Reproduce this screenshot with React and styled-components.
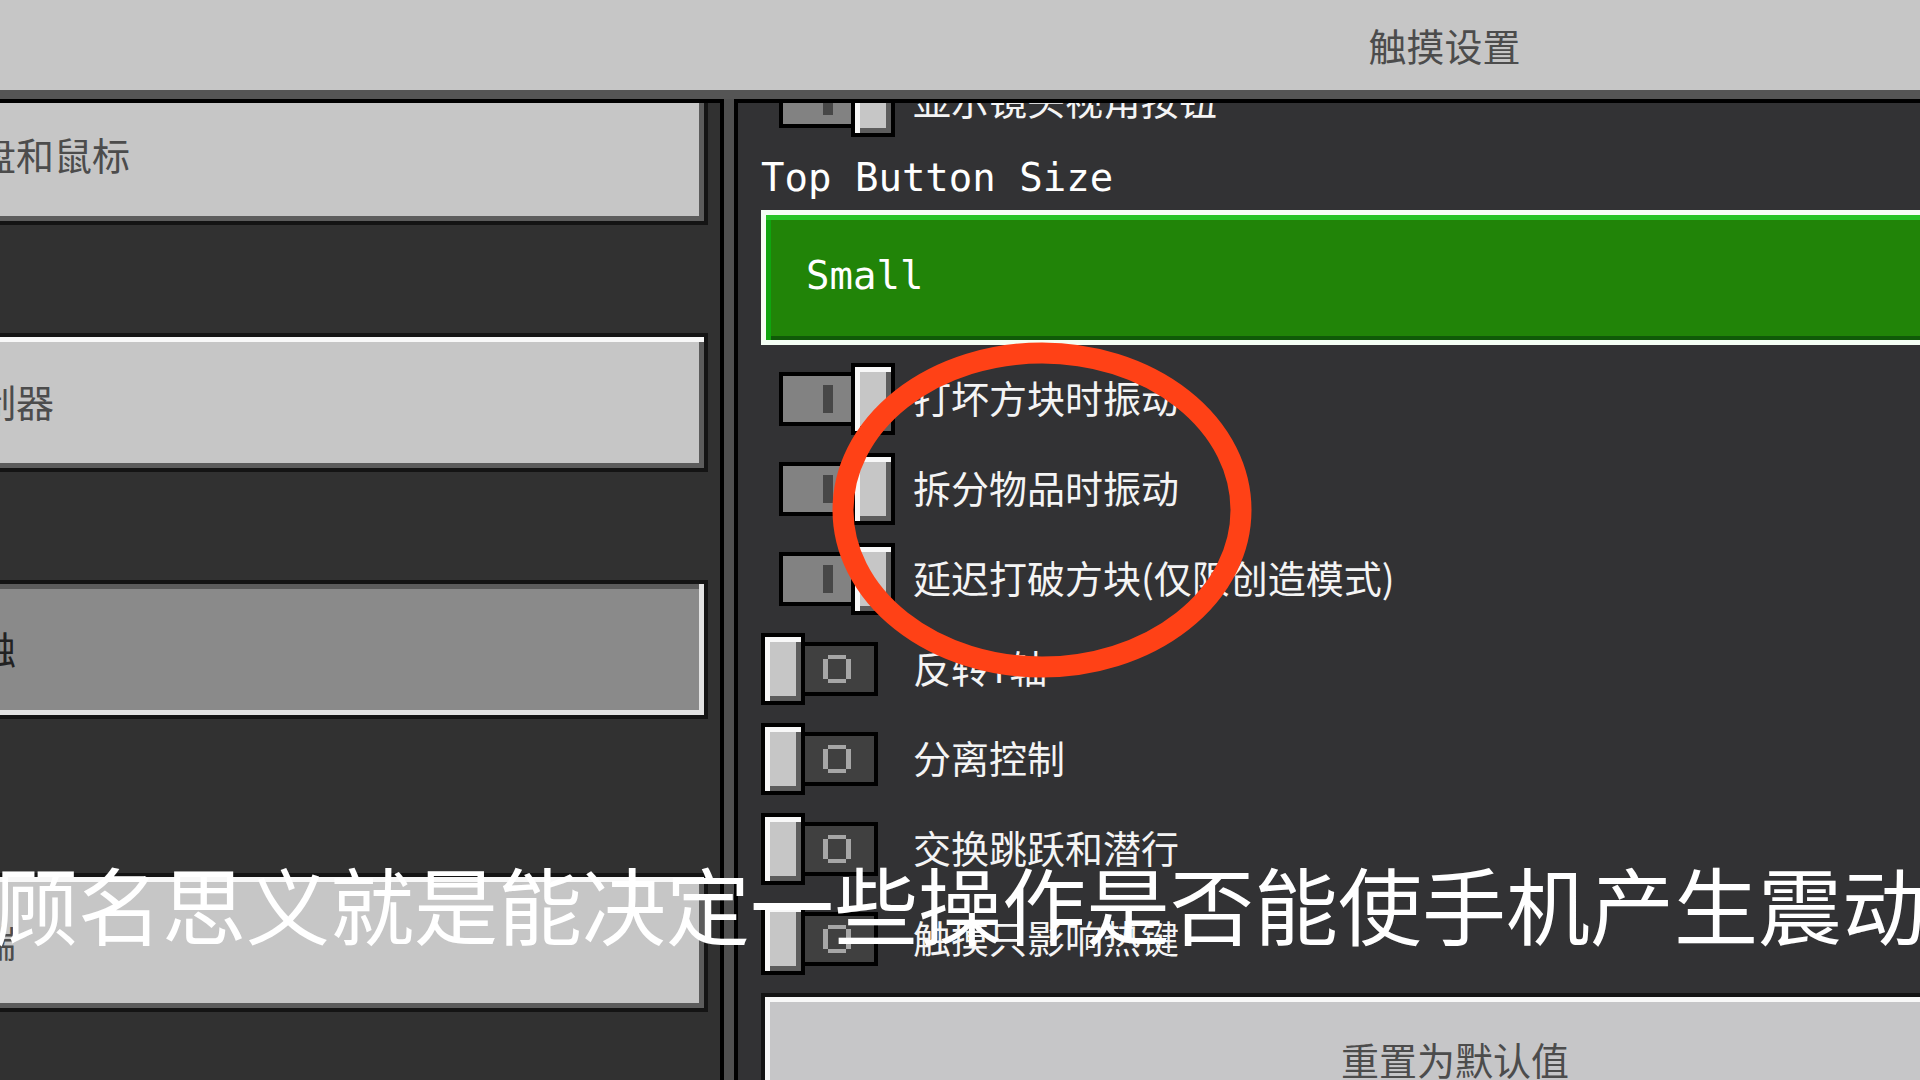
import React, { useState } from 'react';
import styled, { createGlobalStyle, css } from 'styled-components';

const categories = [
  { id: 'keyboard', name: '键盘和鼠标' },
  { id: 'controller', name: '控制器' },
  { id: 'touch', name: '轻触' },
  { id: 'cloud', name: '云端', newSection: true },
];

const toggles = [
  { id: 'blockVibration', name: '打坏方块时振动', on: true },
  { id: 'splitVibration', name: '拆分物品时振动', on: true },
  { id: 'delayBreak', name: '延迟打破方块(仅限创造模式)', on: true },
  { id: 'invertY', name: '反转Y轴', on: false },
  { id: 'splitControls', name: '分离控制', on: false },
  { id: 'swapJump', name: '交换跳跃和潜行', on: false },
  { id: 'hotbarOnly', name: '触摸只影响热键', on: false },
];

const GlobalStyle = createGlobalStyle`
  * {
    box-sizing: border-box;
  }

  body {
    margin: 0;
    overflow: hidden;
    background: #313131;
    font-family: "Noto Sans CJK SC", sans-serif;
    font-size: 38px;
    line-height: 38px;
  }

  button, select, input {
    margin: 0;
    font: inherit;
  }
`;

const ToggleRow = ({ name, on }) => {
  const [checked, setChecked] = useState(on);

  return (
    <Row>
      <Switch>
        <HiddenCheckbox type="checkbox" checked={checked} onChange={() => setChecked(!checked)} />
        <Track $on={checked}>
          <svg width="28" height="28" viewBox="0 0 28 28" shapeRendering="crispEdges">
            {checked
              ? <rect width="10" height="28" fill="#474747" />
              : <path d="M5 0h18v4h-18zM5 24h18v4h-18zM0 4h5v20h-5zM23 4h5v20h-5z" fill="#a6a6a6" />}
          </svg>
        </Track>
        <Knob $on={checked} />
      </Switch>
      <RowText>{name}</RowText>
    </Row>
  );
};

const App = () => {
  const [active, setActive] = useState('touch');

  return (
    <Viewport>
      <GlobalStyle />
      <Screen>
        <Header>
          <Title>触摸设置</Title>
        </Header>
        <Columns>
          <Sidebar>
            {categories.map((item) => (
              <Category
                key={item.id}
                type="button"
                $active={item.id === active}
                $newSection={item.newSection}
                onClick={() => setActive(item.id)}
              >
                {item.name}
              </Category>
            ))}
          </Sidebar>
          <Content>
            <ToggleRow name="显示镜头视角按钮" on />
            <FieldLabel htmlFor="top-button-size">Top Button Size</FieldLabel>
            <Dropdown id="top-button-size" defaultValue="small">
              <option value="small">Small</option>
              <option value="large">Large</option>
            </Dropdown>
            {toggles.map((item) => (
              <ToggleRow key={item.id} name={item.name} on={item.on} />
            ))}
            <ResetButton type="button">重置为默认值</ResetButton>
          </Content>
        </Columns>
      </Screen>
      <Ring viewBox="0 0 420 336">
        <ellipse cx="210" cy="168" rx="199" ry="157" fill="none" stroke="#ff4116" strokeWidth="21" />
      </Ring>
      <Caption>顾名思义就是能决定一些操作是否能使手机产生震动</Caption>
    </Viewport>
  );
};

const raised = css`
  box-shadow: inset 5px 5px 0 #f8f8f8, inset -5px -5px 0 #5c5c5c;
`;

const sunken = css`
  box-shadow: inset -5px -5px 0 #e2e2e2, inset 5px 5px 0 #5c5c5c;
`;

const Viewport = styled.div`
  position: relative;
  height: 100vh;
  overflow: hidden;
`;

/* the menu is zoomed in, so both of its sides run past the window */
const Screen = styled.div`
  display: flex;
  flex-direction: column;
  height: 100%;
  margin: 0 -231px 0 -120px;
`;

const Header = styled.header`
  display: flex;
  flex: none;
  align-items: center;
  height: 99px;
  padding-left: 858px;
  background: #c6c6c6;
  border-bottom: 9px solid #555;
`;

const Title = styled.h1`
  flex: 1;
  margin: 0;
  color: #4c4c4c;
  font-size: 38px;
  font-weight: 400;
  text-align: center;
`;

const Columns = styled.div`
  display: grid;
  flex: 1;
  grid-template-columns: 844px 1fr;
  gap: 10px;
  min-height: 0;
  background: #505050;
`;

const Sidebar = styled.nav`
  display: flex;
  flex-direction: column;
  gap: 108px;
  overflow: hidden;
  padding-right: 12px;
  background: #313131;
  border-top: 4px solid #000;
  border-right: 4px solid #000;

  /* scrolled a little way down */
  & > :first-child {
    margin-top: -17px;
  }
`;

const Category = styled.button`
  flex: none;
  height: 139px;
  margin-top: ${(p) => (p.$newSection ? '46px' : '0')};
  padding: 0 56px 4px;
  border: 4px solid #141414;
  background: ${(p) => (p.$active ? '#8a8a8a' : '#c6c6c6')};
  color: ${(p) => (p.$active ? '#222' : '#4c4c4c')};
  text-align: left;
  ${(p) => (p.$active ? sunken : raised)}
`;

const Content = styled.main`
  display: flex;
  flex-direction: column;
  gap: 18px;
  overflow: hidden;
  padding: 0 2px 0 23px;
  background: #323234;
  border-top: 4px solid #000;
  border-left: 4px solid #000;

  & > :first-child {
    margin-top: -38px;
  }
`;

const Row = styled.label`
  display: flex;
  flex: none;
  align-items: center;
  gap: 18px;
  height: 72px;
  color: #f4f4f4;
`;

const RowText = styled.span`
  padding-bottom: 4px;
`;

const Switch = styled.span`
  position: relative;
  display: flex;
  align-items: center;
  width: 134px;
  height: 72px;
  padding: 0 17px 0 18px;
`;

const HiddenCheckbox = styled.input`
  position: absolute;
  inset: 0;
  width: 100%;
  height: 100%;
  opacity: 0;
`;

const Track = styled.span`
  display: flex;
  flex: 1;
  align-items: center;
  height: 54px;
  padding-left: 40px;
  border: 4px solid #000;
  background: ${(p) => (p.$on ? '#828282' : '#404040')};
`;

const Knob = styled.span`
  position: absolute;
  top: 0;
  left: ${(p) => (p.$on ? '90px' : '0')};
  width: 44px;
  height: 72px;
  border: 4px solid #000;
  background: #c6c6c6;
  ${raised}
`;

const FieldLabel = styled.label`
  flex: none;
  height: 37px;
  color: #fff;
  font-family: "DejaVu Sans Mono", monospace;
  font-size: 39px;
  line-height: 46px;
`;

const Dropdown = styled.select`
  flex: none;
  height: 135px;
  padding: 0 40px 4px;
  appearance: none;
  border: 5px solid #f4fff4;
  border-radius: 0;
  background: #218408;
  box-shadow: inset 0 5px 0 #25c425, inset 5px 0 0 #0fa50f, inset 0 -4px 0 #105a08;
  color: #fff;
  && {
    font-family: "DejaVu Sans Mono", monospace;
    font-size: 39px;
  }
`;

const ResetButton = styled.button`
  flex: none;
  height: 135px;
  padding-bottom: 4px;
  border: 4px solid #141414;
  background: #c6c6c8;
  color: #4c4c4c;
  ${raised}
`;

const Ring = styled.svg`
  position: absolute;
  top: 342px;
  left: 832px;
  width: 420px;
  height: 336px;
  pointer-events: none;
`;

const Caption = styled.p`
  position: absolute;
  top: 861px;
  left: 50%;
  margin: 0;
  color: #fff;
  font-size: 84px;
  line-height: 84px;
  white-space: nowrap;
  transform: translateX(-50%);
  pointer-events: none;
`;

export default App;
